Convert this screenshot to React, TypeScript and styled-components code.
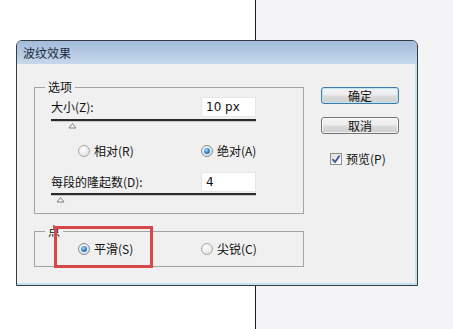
import React from "react";
import styled, { createGlobalStyle } from "styled-components";

const Global = createGlobalStyle`
  html, body { margin: 0; padding: 0; }
  body {
    width: 453px; height: 329px; overflow: hidden;
    font-family: "Noto Sans CJK SC", "Noto Sans", sans-serif;
  }
`;

const Desktop = styled.div`
  position: relative;
  width: 453px;
  height: 329px;
  display: flex;
`;
const WhitePane = styled.div`
  width: 255px;
  background: #ffffff;
`;
const Divider = styled.div`
  width: 1px;
  background: #1b1b1b;
`;
const GrayPane = styled.div`
  flex: 1;
  background: #f4f3f5;
`;

const Window = styled.div`
  position: absolute;
  left: 16px;
  top: 40px;
  width: 402px;
  height: 246px;
  box-sizing: border-box;
  border: 1px solid #363c42;
  border-radius: 6px 6px 0 0;
  display: flex;
  flex-direction: column;
  overflow: hidden;
  background: #f0f0f0;
`;

const TitleBar = styled.div`
  height: 23px;
  flex: none;
  display: flex;
  align-items: center;
  padding-left: 6px;
  background: linear-gradient(#a3bcda, #c6d8ec);
  font-size: 12px;
  line-height: 14px;
  color: #1d2c3f;
`;

const Body = styled.div`
  flex: 1;
  display: flex;
  gap: 17px;
  padding: 23px 0 0 17px;
  border-right: 2px solid #c3e4ef;
  border-bottom: 2px solid #c3e4ef;
`;

const LeftColumn = styled.div`
  display: flex;
  flex-direction: column;
  gap: 17px;
  width: 270px;
`;

const Group = styled.div<{ $pad: string }>`
  position: relative;
  box-sizing: border-box;
  width: 270px;
  border: 1px solid #a4a4a4;
  padding: ${(p) => p.$pad};
  display: flex;
  flex-direction: column;
`;

const Legend = styled.span`
  position: absolute;
  top: -8px;
  left: 10px;
  padding: 0 3px;
  background: #f0f0f0;
  font-size: 12px;
  line-height: 14px;
  color: #111;
`;

const FieldRow = styled.div<{ $mt?: number }>`
  display: flex;
  align-items: center;
  justify-content: space-between;
  height: 20px;
  margin-top: ${(p) => p.$mt ?? 0}px;
`;

const Label = styled.span`
  font-size: 12px;
  line-height: 14px;
  color: #111;
  white-space: nowrap;
`;

const Input = styled.div`
  box-sizing: border-box;
  width: 55px;
  height: 20px;
  background: #ffffff;
  border: 1px solid #e6e6e6;
  padding-left: 4px;
  display: flex;
  align-items: center;
  font-family: "DejaVu Sans", sans-serif;
  font-size: 12px;
  color: #111;
`;

const Slider = styled.div<{ $mt: number }>`
  display: flex;
  flex-direction: column;
  margin-top: ${(p) => p.$mt}px;
`;

const Track = styled.div`
  height: 2px;
  background: #2a2a2a;
  border-bottom: 1px solid #c8c8c8;
`;

const Thumb = styled.svg<{ $x: number }>`
  display: block;
  margin-left: ${(p) => p.$x}px;
`;

const RadioRow = styled.div<{ $mt?: number }>`
  display: grid;
  grid-template-columns: 123px max-content;
  padding-left: 27px;
  height: 14px;
  align-items: center;
  margin-top: ${(p) => p.$mt ?? 0}px;
`;

const RadioItem = styled.label`
  display: flex;
  align-items: center;
  gap: 4px;
  font-size: 12px;
  line-height: 14px;
  color: #111;
  white-space: nowrap;
`;

const RadioCircle = styled.span<{ $on?: boolean }>`
  box-sizing: border-box;
  flex: none;
  width: 12px;
  height: 12px;
  border-radius: 50%;
  border: 1px solid ${(p) => (p.$on ? "#7f8c99" : "#a9a9a9")};
  background: radial-gradient(circle at 40% 35%, #ffffff 0%, #e9e9e9 60%, #d3d3d3 100%);
  display: flex;
  align-items: center;
  justify-content: center;
  &::after {
    content: "";
    display: ${(p) => (p.$on ? "block" : "none")};
    width: 6px;
    height: 6px;
    border-radius: 50%;
    background: radial-gradient(circle at 40% 35%, #bfe6ff 0%, #3d8fd6 40%, #0f4d8c 100%);
  }
`;

const Annotation = styled.div`
  position: absolute;
  left: 19px;
  top: -6px;
  width: 99px;
  height: 42px;
  box-sizing: border-box;
  border: 3px solid #d6464b;
  z-index: 2;
`;

const ButtonColumn = styled.div`
  display: flex;
  flex-direction: column;
  width: 78px;
`;

const Button = styled.div<{ $default?: boolean; $mt?: number }>`
  box-sizing: border-box;
  width: 78px;
  height: 17px;
  margin-top: ${(p) => p.$mt ?? 0}px;
  border-radius: 3px;
  border: 1px solid ${(p) => (p.$default ? "#3d7ca8" : "#747474")};
  box-shadow: inset 0 0 0 1px ${(p) => (p.$default ? "#bde6f5" : "rgba(255,255,255,0.75)")};
  background: linear-gradient(#f4f4f4 0%, #ececec 48%, #dcdcdc 52%, #cdcdcd 100%);
  display: flex;
  align-items: center;
  justify-content: center;
  font-size: 12px;
  line-height: 14px;
  color: #111;
`;

const CheckRow = styled.label`
  display: flex;
  align-items: center;
  gap: 4px;
  height: 13px;
  margin-top: 18px;
  padding-left: 9px;
  font-size: 12px;
  line-height: 14px;
  color: #111;
  white-space: nowrap;
`;

const CheckBox = styled.span`
  box-sizing: border-box;
  flex: none;
  width: 12px;
  height: 12px;
  border: 1px solid #8e8f8f;
  background: linear-gradient(135deg, #dcdcdc, #ffffff);
  display: flex;
  align-items: center;
  justify-content: center;
`;

const TriangleThumb = ({ x }: { x: number }) => (
  <Thumb $x={x} width="9" height="7" viewBox="0 0 9 7">
    <path d="M4.5 1.5 L8 6 L1 6 Z" fill="#f7f7f7" stroke="#808080" strokeWidth="1" />
  </Thumb>
);

export default function App() {
  return (
    <>
      <Global />
      <Desktop>
        <WhitePane />
        <Divider />
        <GrayPane />
        <Window>
          <TitleBar>波纹效果</TitleBar>
          <Body>
            <LeftColumn>
              <Group $pad="9px 47px 10px 16px">
                <Legend>选项</Legend>
                <FieldRow>
                  <Label>大小(Z):</Label>
                  <Input>10 px</Input>
                </FieldRow>
                <Slider $mt={2}>
                  <Track />
                  <TriangleThumb x={17} />
                </Slider>
                <RadioRow $mt={15}>
                  <RadioItem>
                    <RadioCircle />
                    相对(R)
                  </RadioItem>
                  <RadioItem>
                    <RadioCircle $on />
                    绝对(A)
                  </RadioItem>
                </RadioRow>
                <FieldRow $mt={14}>
                  <Label>每段的隆起数(D):</Label>
                  <Input>4</Input>
                </FieldRow>
                <Slider $mt={1}>
                  <Track />
                  <TriangleThumb x={5} />
                </Slider>
              </Group>
              <Group $pad="10px 47px 10px 16px">
                <Legend>点</Legend>
                <Annotation />
                <RadioRow>
                  <RadioItem>
                    <RadioCircle $on />
                    平滑(S)
                  </RadioItem>
                  <RadioItem>
                    <RadioCircle />
                    尖锐(C)
                  </RadioItem>
                </RadioRow>
              </Group>
            </LeftColumn>
            <ButtonColumn>
              <Button $default>确定</Button>
              <Button $mt={13}>取消</Button>
              <CheckRow>
                <CheckBox>
                  <svg width="10" height="10" viewBox="0 0 10 10">
                    <path d="M1.5 5.2 L4 8 L8.6 1.6" fill="none" stroke="#3f5a94" strokeWidth="1.8" />
                  </svg>
                </CheckBox>
                预览(P)
              </CheckRow>
            </ButtonColumn>
          </Body>
        </Window>
      </Desktop>
    </>
  );
}
